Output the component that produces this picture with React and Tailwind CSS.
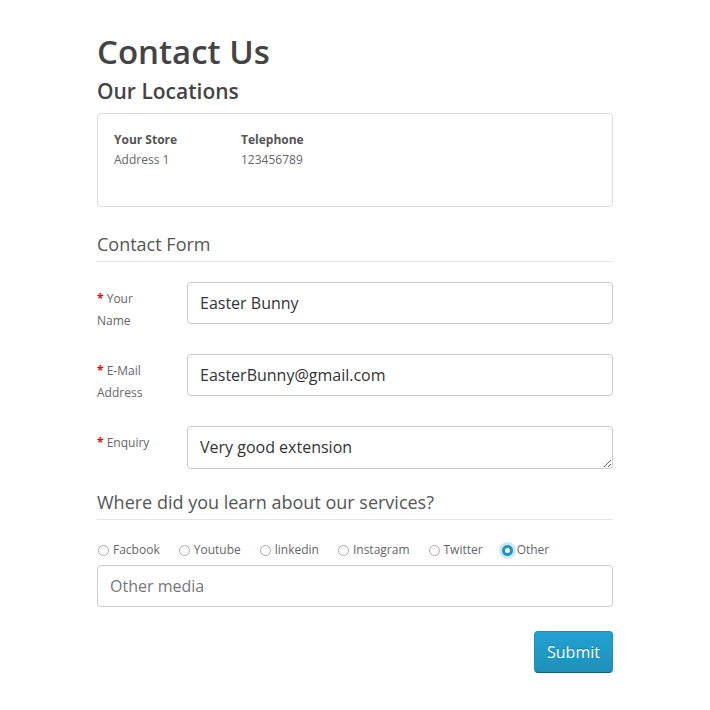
import React from "react";

const font = { fontFamily: "'Open Sans', 'Liberation Sans', sans-serif" };

const sources = ["Facbook", "Youtube", "linkedin", "Instagram", "Twitter", "Other"];

function Radio({ label, checked }) {
  return (
    <label className="mr-[19px] flex items-center gap-[4px] text-[12px] leading-[20px] text-[#666]">
      {checked ? (
        <span className="-mx-[3px] flex h-[17px] w-[17px] items-center justify-center rounded-full bg-[#cde7f3]">
          <span className="h-[11px] w-[11px] rounded-full border-[3px] border-[#1e94c8] bg-white" />
        </span>
      ) : (
        <span className="h-[11px] w-[11px] rounded-full border border-[#aaa] bg-white" />
      )}
      {label}
    </label>
  );
}

function Field({ first, second, children }) {
  return (
    <div className="flex">
      <div className="h-[42px] w-[90px] pt-[6px] text-[12px] leading-[22px] text-[#666]">
        <span className="text-[#f00] font-bold">*</span> {first}
        {second && <div>{second}</div>}
      </div>
      <div className="flex-1">{children}</div>
    </div>
  );
}

const inputCls =
  "block w-full rounded-[4px] border border-[#ccc] bg-white px-[12px] text-[16px] text-[#333] outline-none";

export default function App() {
  return (
    <div className="min-h-[710px] bg-white" style={font}>
      <div className="mx-auto w-[516px]">
        <h1 className="mt-[32px] text-[33px] font-semibold leading-[40px] text-[#444]">Contact Us</h1>
        <h2 className="mt-[5px] text-[21px] font-semibold leading-[28px] text-[#444]">Our Locations</h2>

        <div className="mt-[8px] flex h-[94px] rounded-[4px] border border-[#ddd] px-[16px] pt-[16px] text-[12px] leading-[20px] text-[#666]">
          <div className="w-[127px]">
            <div className="font-bold text-[#555]">Your Store</div>
            <div>Address 1</div>
          </div>
          <div>
            <div className="font-bold text-[#555]">Telephone</div>
            <div>123456789</div>
          </div>
        </div>

        <div className="mt-[24px] border-b border-[#e5e5e5] pb-[4px] text-[18px] leading-[26px] text-[#555]">
          Contact Form
        </div>

        <div className="mt-[20px] flex flex-col gap-[30px]">
          <Field first="Your" second="Name">
            <input readOnly value="Easter Bunny" className={`${inputCls} h-[42px]`} />
          </Field>
          <Field first="E-Mail" second="Address">
            <input readOnly value="EasterBunny@gmail.com" className={`${inputCls} h-[42px]`} />
          </Field>
          <Field first="Enquiry">
            <textarea
              readOnly
              value="Very good extension"
              className={`${inputCls} h-[43px] py-[7px] leading-[26px]`}
            />
          </Field>
        </div>

        <div className="mt-[20px] border-b border-[#e5e5e5] pb-[4px] text-[18px] leading-[26px] text-[#555]">
          Where did you learn about our services?
        </div>

        <div className="mt-[20px] flex pl-[1px]">
          {sources.map((s) => (
            <Radio key={s} label={s} checked={s === "Other"} />
          ))}
        </div>

        <input
          readOnly
          placeholder="Other media"
          className={`${inputCls} mt-[5px] h-[42px] placeholder:text-[#777]`}
        />

        <div className="mt-[24px] flex justify-end">
          <button className="h-[42px] w-[79px] rounded-[4px] border border-[#1f90bb] border-b-[#145e7a] bg-gradient-to-b from-[#23a1d1] to-[#1f90bb] text-[16px] text-white [text-shadow:0_-1px_0_rgba(0,0,0,0.25)]">
            Submit
          </button>
        </div>
      </div>
    </div>
  );
}
